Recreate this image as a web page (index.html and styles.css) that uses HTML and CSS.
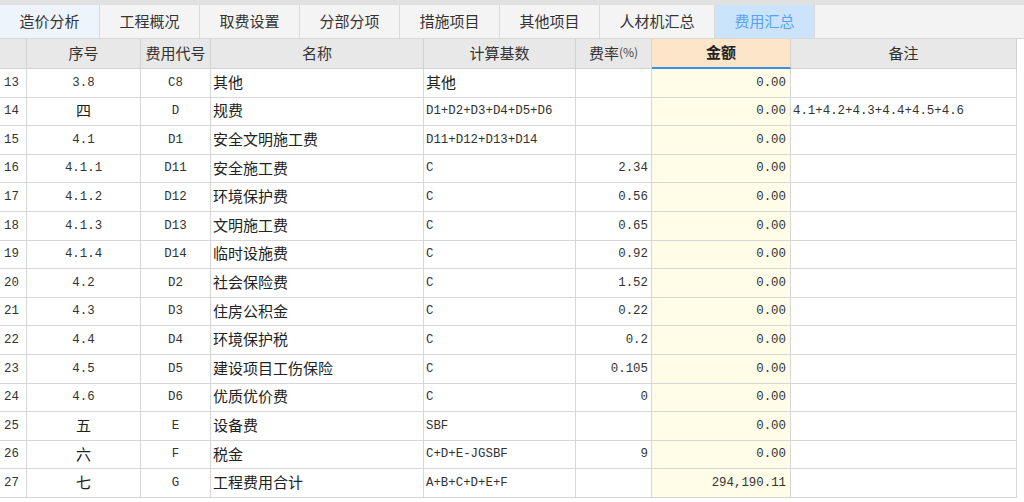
FILE: index.html
```html
<!DOCTYPE html>
<html lang="zh-CN">
<head>
<meta charset="utf-8">
<title>费用汇总</title>
<link rel="stylesheet" href="styles.css">
</head>
<body>
<div class="app">
  <div class="topstrip"></div>
  <nav class="tabs">
    <div class="tab tab-hover">造价分析</div>
    <div class="tab">工程概况</div>
    <div class="tab">取费设置</div>
    <div class="tab">分部分项</div>
    <div class="tab">措施项目</div>
    <div class="tab">其他项目</div>
    <div class="tab tab-wide">人材机汇总</div>
    <div class="tab tab-active">费用汇总</div>
    <div class="tab-fill"></div>
  </nav>
  <div class="grid">
    <div class="hd"></div>
    <div class="hd">序号</div>
    <div class="hd">费用代号</div>
    <div class="hd">名称</div>
    <div class="hd">计算基数</div>
    <div class="hd">费率<span class="pct">(%)</span></div>
    <div class="hd hd-amt">金额</div>
    <div class="hd">备注</div>

    <div class="c rn">13</div><div class="c ctr mono">3.8</div><div class="c ctr mono">C8</div><div class="c cn">其他</div><div class="c cn">其他</div><div class="c r mono"></div><div class="c amt mono">0.00</div><div class="c mono"></div>
    <div class="c rn">14</div><div class="c ctr cn">四</div><div class="c ctr mono">D</div><div class="c cn">规费</div><div class="c mono">D1+D2+D3+D4+D5+D6</div><div class="c r mono"></div><div class="c amt mono">0.00</div><div class="c mono">4.1+4.2+4.3+4.4+4.5+4.6</div>
    <div class="c rn">15</div><div class="c ctr mono">4.1</div><div class="c ctr mono">D1</div><div class="c cn">安全文明施工费</div><div class="c mono">D11+D12+D13+D14</div><div class="c r mono"></div><div class="c amt mono">0.00</div><div class="c mono"></div>
    <div class="c rn">16</div><div class="c ctr mono">4.1.1</div><div class="c ctr mono">D11</div><div class="c cn">安全施工费</div><div class="c mono">C</div><div class="c r mono">2.34</div><div class="c amt mono">0.00</div><div class="c mono"></div>
    <div class="c rn">17</div><div class="c ctr mono">4.1.2</div><div class="c ctr mono">D12</div><div class="c cn">环境保护费</div><div class="c mono">C</div><div class="c r mono">0.56</div><div class="c amt mono">0.00</div><div class="c mono"></div>
    <div class="c rn">18</div><div class="c ctr mono">4.1.3</div><div class="c ctr mono">D13</div><div class="c cn">文明施工费</div><div class="c mono">C</div><div class="c r mono">0.65</div><div class="c amt mono">0.00</div><div class="c mono"></div>
    <div class="c rn">19</div><div class="c ctr mono">4.1.4</div><div class="c ctr mono">D14</div><div class="c cn">临时设施费</div><div class="c mono">C</div><div class="c r mono">0.92</div><div class="c amt mono">0.00</div><div class="c mono"></div>
    <div class="c rn">20</div><div class="c ctr mono">4.2</div><div class="c ctr mono">D2</div><div class="c cn">社会保险费</div><div class="c mono">C</div><div class="c r mono">1.52</div><div class="c amt mono">0.00</div><div class="c mono"></div>
    <div class="c rn">21</div><div class="c ctr mono">4.3</div><div class="c ctr mono">D3</div><div class="c cn">住房公积金</div><div class="c mono">C</div><div class="c r mono">0.22</div><div class="c amt mono">0.00</div><div class="c mono"></div>
    <div class="c rn">22</div><div class="c ctr mono">4.4</div><div class="c ctr mono">D4</div><div class="c cn">环境保护税</div><div class="c mono">C</div><div class="c r mono">0.2</div><div class="c amt mono">0.00</div><div class="c mono"></div>
    <div class="c rn">23</div><div class="c ctr mono">4.5</div><div class="c ctr mono">D5</div><div class="c cn">建设项目工伤保险</div><div class="c mono">C</div><div class="c r mono">0.105</div><div class="c amt mono">0.00</div><div class="c mono"></div>
    <div class="c rn">24</div><div class="c ctr mono">4.6</div><div class="c ctr mono">D6</div><div class="c cn">优质优价费</div><div class="c mono">C</div><div class="c r mono">0</div><div class="c amt mono">0.00</div><div class="c mono"></div>
    <div class="c rn">25</div><div class="c ctr cn">五</div><div class="c ctr mono">E</div><div class="c cn">设备费</div><div class="c mono">SBF</div><div class="c r mono"></div><div class="c amt mono">0.00</div><div class="c mono"></div>
    <div class="c rn">26</div><div class="c ctr cn">六</div><div class="c ctr mono">F</div><div class="c cn">税金</div><div class="c mono">C+D+E-JGSBF</div><div class="c r mono">9</div><div class="c amt mono">0.00</div><div class="c mono"></div>
    <div class="c rn">27</div><div class="c ctr cn">七</div><div class="c ctr mono">G</div><div class="c cn">工程费用合计</div><div class="c mono">A+B+C+D+E+F</div><div class="c r mono"></div><div class="c amt mono">294,190.11</div><div class="c mono"></div>
  </div>
</div>
</body>
</html>
```
FILE: styles.css
```css
* { box-sizing: border-box; }
html, body { margin: 0; padding: 0; background: #ffffff; }
body {
  width: 1024px;
  height: 502px;
  overflow: hidden;
  font-family: "Noto Sans CJK SC", "DejaVu Sans", sans-serif;
  color: #222;
}
.app { display: flex; flex-direction: column; }
.topstrip { height: 5px; background: #e1e1e1; }
.tabs {
  display: flex;
  height: 34px;
  background: #f3f3f3;
  border-bottom: 1px solid #d8d8d8;
}
.tab {
  width: 100px;
  display: flex;
  align-items: center;
  justify-content: center;
  font-size: 15px;
  line-height: 1;
  padding-bottom: 2px;
  color: #333;
  border-right: 1px solid #dadada;
  background: #f4f4f4;
}
.tab-hover { background: #edf4fc; }
.tab-wide { width: 115px; }
.tab-active { background: #cbe4fc; color: #5aa2ef; }
.tab-fill { flex: 1; }

.grid {
  display: grid;
  width: 1017px;
  grid-template-columns: 27px 114px 70px 213px 152px 76px 139px 226px;
  grid-template-rows: 30px;
  grid-auto-rows: 28.6px;
}
.hd {
  background: #e8e8e8;
  border-right: 1px solid #d2d2d2;
  border-bottom: 1px solid #d2d2d2;
  display: flex;
  align-items: center;
  justify-content: center;
  font-size: 15px;
  line-height: 1;
  padding-bottom: 3px;
  color: #333;
}
.pct { font-size: 12px; color: #444; }
.hd-amt {
  background: #fde5c9;
  border-bottom: 2px solid #3c8fe8;
  font-weight: bold;
  color: #222;
}
.c {
  border-right: 1px solid #d6d6d6;
  border-bottom: 1px solid #d6d6d6;
  display: flex;
  align-items: center;
  padding: 0 2px;
  white-space: nowrap;
  overflow: hidden;
  line-height: 1;
  background: #ffffff;
}
.cn { font-size: 15px; color: #222; padding-bottom: 3px; }
.mono {
  font-family: "Liberation Mono", "Noto Sans CJK SC", monospace;
  font-size: 12.4px;
  color: #333;
}
.rn {
  font-family: "Liberation Mono", monospace;
  font-size: 12.4px;
  color: #333;
  padding-left: 4px;
}
.ctr { justify-content: center; }
.r { justify-content: flex-end; padding-right: 3px; }
.amt { justify-content: flex-end; padding-right: 4px; background: #fffde8; }
```
